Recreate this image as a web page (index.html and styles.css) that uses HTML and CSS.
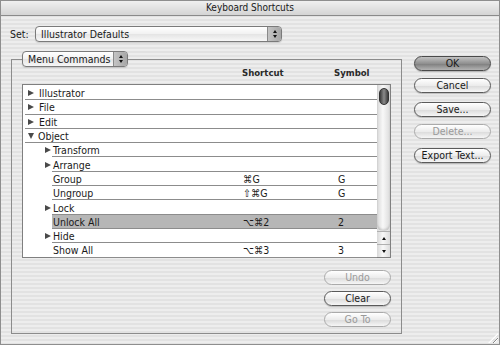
FILE: index.html
```html
<!DOCTYPE html>
<html>
<head>
    <meta name="viewport" content="width=device-width, initial-scale=1.0">
    <link rel="stylesheet" href="styles.css">
</head>
<body>
    <div class="window">
        <div class="titlebar">Keyboard Shortcuts</div>

        <div class="content">
            <div class="set-row">
                <span class="label">Set:</span>
                <div class="popup set-popup">
                    <span class="popup-text">Illustrator Defaults</span>
                    <span class="stepper"><i class="up"></i><i class="down"></i></span>
                </div>
            </div>

            <div class="main">
                <fieldset class="group">
                    <legend>
                        <div class="popup menu-popup">
                            <span class="popup-text">Menu Commands</span>
                            <span class="stepper"><i class="up"></i><i class="down"></i></span>
                        </div>
                    </legend>

                    <div class="cols">
                        <span></span>
                        <span>Shortcut</span>
                        <span>Symbol</span>
                    </div>

                    <div class="list">
                        <div class="rows">
                            <div class="row top"><div class="cell"><i class="tri right"></i><span class="name">Illustrator</span></div></div>
                            <div class="row top"><div class="cell"><i class="tri right"></i><span class="name">File</span></div></div>
                            <div class="row top"><div class="cell"><i class="tri right"></i><span class="name">Edit</span></div></div>
                            <div class="row top"><div class="cell"><i class="tri down"></i><span class="name">Object</span></div></div>
                            <div class="row child"><i class="tri right"></i><div class="cell"><span class="name">Transform</span></div></div>
                            <div class="row child"><i class="tri right"></i><div class="cell"><span class="name">Arrange</span></div></div>
                            <div class="row child"><i class="tri none"></i><div class="cell"><span class="name">Group</span><span class="sc">⌘G</span><span class="sym">G</span></div></div>
                            <div class="row child"><i class="tri none"></i><div class="cell"><span class="name">Ungroup</span><span class="sc">⇧⌘G</span><span class="sym">G</span></div></div>
                            <div class="row child"><i class="tri right"></i><div class="cell"><span class="name">Lock</span></div></div>
                            <div class="row child"><i class="tri none"></i><div class="cell selected"><span class="name">Unlock All</span><span class="sc">⌥⌘2</span><span class="sym">2</span></div></div>
                            <div class="row child"><i class="tri right"></i><div class="cell"><span class="name">Hide</span></div></div>
                            <div class="row child"><i class="tri none"></i><div class="cell"><span class="name">Show All</span><span class="sc">⌥⌘3</span><span class="sym">3</span></div></div>
                        </div>
                        <div class="scrollbar">
                            <div class="track">
                                <div class="thumb"></div>
                            </div>
                            <div class="arrow"><i class="up"></i></div>
                            <div class="arrow"><i class="down"></i></div>
                        </div>
                    </div>

                    <div class="list-buttons">
                        <div class="btn disabled">Undo</div>
                        <div class="btn">Clear</div>
                        <div class="btn disabled">Go To</div>
                    </div>
                </fieldset>

                <div class="side">
                    <div class="btn default">OK</div>
                    <div class="btn">Cancel</div>
                    <div class="btn spaced">Save...</div>
                    <div class="btn disabled">Delete...</div>
                    <div class="btn spaced">Export Text...</div>
                </div>
            </div>
        </div>

        <div class="grip"></div>
    </div>
</body>
</html>
```

FILE: styles.css
```css
/* Basic page setup */
body {
    margin: 0;
    font-family: "DejaVu Sans Condensed", "DejaVu Sans", sans-serif;
    font-stretch: condensed;
    font-size: 10.5px;
    color: #1a1a1a;
}

/* Window frame with pinstripes */
.window {
    width: 500px;
    height: 345px;
    box-sizing: border-box;
    border: 1px solid #8e8e8e;
    background: repeating-linear-gradient(to bottom, #ededed 0 2px, #e2e2e2 2px 4px);
    position: relative;
    overflow: hidden;
}

.titlebar {
    height: 14px;
    line-height: 14px;
    text-align: center;
    border-bottom: 1px solid #8a8a8a;
    background: linear-gradient(#f0f0f0, #d4d4d4);
    font-size: 10px;
}

.content {
    padding: 10px 0 0 9px;
}

/* Set popup row */
.set-row {
    display: flex;
    align-items: center;
    gap: 7px;
    height: 16px;
}

.label {
    width: 18px;
}

.popup {
    display: flex;
    align-items: stretch;
    height: 16px;
    box-sizing: border-box;
    border: 1px solid #7a7a7a;
    border-radius: 4px;
    background: linear-gradient(#ffffff, #f1f1f1 50%, #e4e4e4 51%, #f7f7f7);
    box-shadow: 0 1px 1px #0002;
    overflow: hidden;
}

.popup-text {
    flex: 1;
    padding-left: 5px;
    line-height: 14px;
    white-space: nowrap;
}

.set-popup {
    width: 247px;
}

.menu-popup {
    width: 106px;
}

.stepper {
    width: 13px;
    border-left: 1px solid #8a8a8a;
    background: linear-gradient(to right, #c4c4c4, #a6a6a6);
    display: flex;
    flex-direction: column;
    align-items: center;
    justify-content: center;
    gap: 2px;
}

.stepper i,
.arrow i {
    width: 0;
    height: 0;
    border-left: 2.5px solid transparent;
    border-right: 2.5px solid transparent;
}

.stepper .up,
.arrow .up {
    border-bottom: 3px solid #111;
}

.stepper .down,
.arrow .down {
    border-top: 3px solid #111;
}

/* Main area: group box and side buttons */
.main {
    display: grid;
    grid-template-columns: 391px 77px;
    column-gap: 12px;
    margin: 9px 0 0 1px;
}

.group {
    margin: 0;
    padding: 0 10px 6px;
    border: 1px solid #8c8c8c;
    min-width: 0;
}

.group legend {
    padding: 0;
}

.cols {
    display: grid;
    grid-template-columns: 220px 92px auto;
    height: 17px;
    line-height: 12px;
    font-weight: bold;
    font-size: 9.5px;
    color: #2a2a2a;
}

/* Outline list */
.list {
    display: flex;
    height: 174px;
    box-sizing: border-box;
    border: 1px solid #7f7f7f;
    background: white;
}

.rows {
    flex: 1;
    padding-top: 1px;
}

.row {
    display: flex;
    align-items: stretch;
    height: 14.3px;
}

.cell {
    flex: 1;
    display: flex;
    align-items: center;
    border-bottom: 1px solid #8c8c8c;
    box-sizing: border-box;
    white-space: nowrap;
    padding-top: 1px;
}

.row.top .cell {
    margin-left: 2px;
    padding-left: 3px;
}

.row.child {
    padding-left: 22px;
}

.row.child > .tri {
    margin-right: 1px;
    align-self: center;
}

.row.child .cell {
    padding-left: 1px;
}

.cell.selected {
    background: #b6b6b6;
}

.name {
    flex: 1;
}

.sc {
    width: 95px;
}

.sym {
    width: 39px;
}

/* Disclosure triangles */
.tri {
    width: 0;
    height: 0;
    flex: none;
}

.tri.right {
    border-left: 6px solid #4a4a4a;
    border-top: 3.5px solid transparent;
    border-bottom: 3.5px solid transparent;
    margin-right: 5px;
}

.row.top .tri.down {
    border-top: 6px solid #4a4a4a;
    border-left: 3.5px solid transparent;
    border-right: 3.5px solid transparent;
    margin-right: 4px;
}

.tri.none {
    width: 6px;
}

/* Scrollbar */
.scrollbar {
    width: 13px;
    display: flex;
    flex-direction: column;
    background: linear-gradient(to right, #d8d8d8, #f8f8f8 45%, #dcdcdc);
}

.track {
    flex: 1;
    padding: 3px 1px 0 2px;
    border-bottom-left-radius: 6px;
    border-bottom-right-radius: 6px;
    box-shadow: inset 0 -2px 2px #0002;
}

.thumb {
    height: 17px;
    border-radius: 5px;
    border: 1px solid #333;
    background: linear-gradient(to right, #3c3c3c, #8a8a8a 50%, #3c3c3c);
    box-sizing: border-box;
}

.arrow {
    height: 13px;
    display: flex;
    align-items: center;
    justify-content: center;
    border-top: 1px solid #b0b0b0;
    box-sizing: border-box;
}

/* Buttons */
.btn {
    height: 15px;
    box-sizing: border-box;
    border: 1px solid #5a5a5a;
    border-radius: 8px;
    background: linear-gradient(#ffffff, #ececec 50%, #dadada 51%, #f6f6f6);
    box-shadow: 0 1px 1px #0003;
    text-align: center;
    line-height: 13px;
    white-space: nowrap;
}

.btn.default {
    background: linear-gradient(#c2c2c2, #909090 50%, #7c7c7c 51%, #b2b2b2);
    border-color: #4a4a4a;
}

.btn.disabled {
    border-color: #aaa;
    color: #9a9a9a;
    box-shadow: none;
}

.list-buttons {
    display: flex;
    flex-direction: column;
    align-items: flex-end;
    gap: 6px;
    margin-top: 12px;
}

.list-buttons .btn {
    width: 67px;
}

.side {
    display: flex;
    flex-direction: column;
    gap: 7px;
    margin-top: 5px;
}

.side .spaced {
    margin-top: 2px;
}

/* Resize grip in the window corner */
.grip {
    position: absolute;
    right: 1px;
    bottom: 1px;
    width: 10px;
    height: 10px;
    background: repeating-linear-gradient(135deg, transparent 0 2px, #8a8a8a 2px 3px, #fff 3px 4px);
    clip-path: polygon(100% 0, 100% 100%, 0 100%);
}
```
